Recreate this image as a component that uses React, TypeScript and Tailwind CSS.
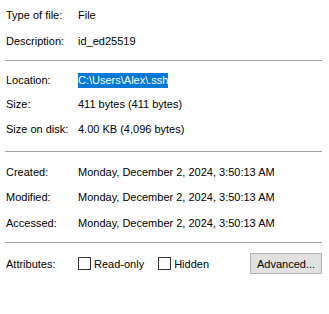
import React from "react";

const Row = ({ label, value, mt }: { label: string; value: React.ReactNode; mt: string }) => (
  <div className={`flex h-[16px] items-center ${mt}`}>
    <div className="w-[72px] shrink-0">{label}</div>
    <div>{value}</div>
  </div>
);

const Sep = ({ mt }: { mt: string }) => (
  <div className={`h-px w-[317px] ml-[-1px] bg-[#a0a0a0] ${mt}`} />
);

const Box = () => <div className="h-[13px] w-[13px] border border-[#333333] bg-white shrink-0" />;

export default function App() {
  return (
    <div
      className="w-[329px] h-[314px] bg-white text-black text-[11px] leading-[16px] pl-[6px] pt-[7px]"
      style={{ fontFamily: '"Liberation Sans", Arial, sans-serif' }}
    >
      <Row label="Type of file:" value="File" mt="mt-0" />
      <Row label="Description:" value="id_ed25519" mt="mt-[10px]" />
      <Sep mt="mt-[11px]" />
      <Row
        label="Location:"
        value={<span className="bg-[#0078d7] text-white inline-block h-[15px] leading-[15px]">C:\Users\Alex\.ssh</span>}
        mt="mt-[11px]"
      />
      <Row label="Size:" value="411 bytes (411 bytes)" mt="mt-[8px]" />
      <Row label="Size on disk:" value="4.00 KB (4,096 bytes)" mt="mt-[9px]" />
      <Sep mt="mt-[14px]" />
      <Row label="Created:" value="Monday, December 2, 2024, 3:50:13 AM" mt="mt-[12px]" />
      <Row label="Modified:" value="Monday, December 2, 2024, 3:50:13 AM" mt="mt-[9px]" />
      <Row label="Accessed:" value="Monday, December 2, 2024, 3:50:13 AM" mt="mt-[10px]" />
      <Sep mt="mt-[11px]" />
      <div className="flex items-center h-[21px] mt-[10px]">
        <div className="w-[72px] shrink-0">Attributes:</div>
        <div className="flex items-center gap-[3px]">
          <Box />
          <span>Read-only</span>
        </div>
        <div className="flex items-center gap-[3px] ml-[14px]">
          <Box />
          <span>Hidden</span>
        </div>
        <button className="ml-auto mr-[7px] h-[21px] w-[72px] bg-[#e1e1e1] border border-[#adadad] text-[11px] text-black">
          Advanced...
        </button>
      </div>
    </div>
  );
}
